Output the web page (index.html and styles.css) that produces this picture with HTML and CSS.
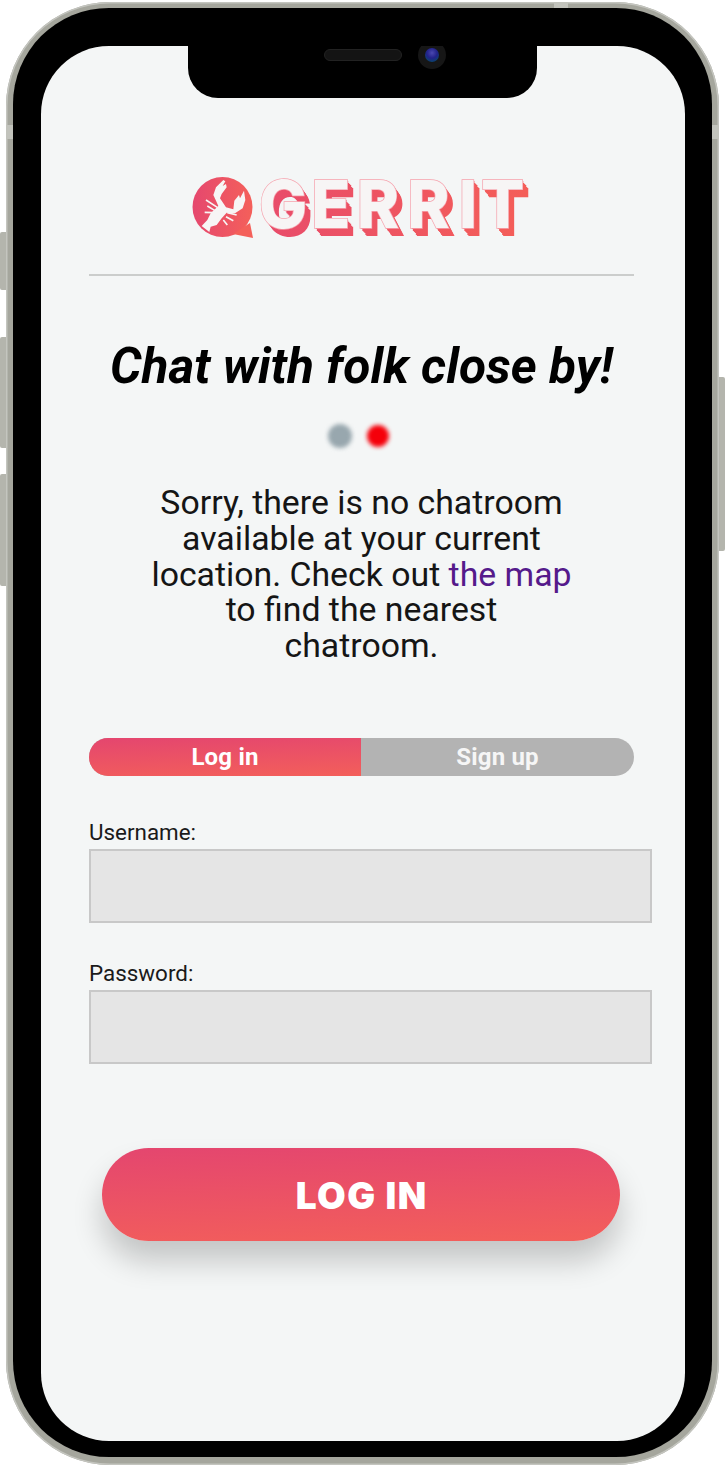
FILE: index.html
```html
<!DOCTYPE html>
<html lang="en">
<head>
<meta charset="utf-8">
<title>Gerrit</title>
<link rel="stylesheet" href="styles.css">
</head>
<body>
<div class="phone">
  <span class="side side-l1"></span>
  <span class="side side-l2"></span>
  <span class="side side-l3"></span>
  <span class="side side-r1"></span>
  <span class="band band-l"></span>
  <span class="band band-r"></span>
  <span class="band band-t"></span>
  <div class="bezel">
    <div class="screen">
      <div class="notch">
        <span class="speaker"></span>
        <span class="camera"><span class="lens"></span></span>
      </div>
      <main class="content">
        <header class="brand">
          <svg class="logo" width="340" height="64" viewBox="0 0 340 64" aria-label="Gerrit">
            <defs>
              <linearGradient id="g" gradientUnits="userSpaceOnUse" x1="0" y1="0" x2="340" y2="0">
                <stop offset="0" stop-color="#e5476f"/>
                <stop offset="1" stop-color="#f45e58"/>
              </linearGradient>
              <linearGradient id="b" gradientUnits="userSpaceOnUse" x1="0" y1="0" x2="62" y2="0">
                <stop offset="0" stop-color="#e5476f"/>
                <stop offset="1" stop-color="#f4605a"/>
              </linearGradient>
              <text id="word" class="logo-word" transform="scale(.97 1)" x="70 124 171 223 276 299" y="52">GERRIT</text>
            </defs>
            <circle cx="31.500" cy="31" r="30" fill="url(#b)"/>
            <path fill="#f4605a" d="M48 54L59 47L62 62L42 58z"/>
            <g transform="translate(-1 -6) scale(.3333)">
              <path fill="#f7f5f5" d="M35 168L52 150L62 130L85 108L78 92L70 75L78 52L100 30L106 34L98 48L108 42L110 52L95 72L90 85L100 100L108 112L130 118L133 92L147 75L150 85L162 62L166 90L158 115L135 130L110 128L95 145L80 165L62 170L58 186z"/>
              <path fill="none" stroke="#f7f5f5" stroke-width="5" d="M48 90L82 112M52 108L75 122M44 127L72 128M112 128L140 135M108 140L130 152M100 150L112 165"/>
            </g>
            <use href="#word" x="6" y="8" fill="url(#g)"/>
            <use href="#word" x="5" y="7" fill="url(#g)"/>
            <use href="#word" x="4" y="5" fill="url(#g)"/>
            <use href="#word" x="3" y="4" fill="url(#g)"/>
            <use href="#word" x="2" y="3" fill="url(#g)"/>
            <use href="#word" x="1" y="1" fill="url(#g)"/>
            <use href="#word" class="logo-face"/>
          </svg>
        </header>
        <hr class="rule">
        <h1 class="title">Chat with folk close by!</h1>
        <div class="status">
          <span class="dot dot-grey"></span>
          <span class="dot dot-red"></span>
        </div>
        <p class="message">Sorry, there is no chatroom available at your current location. Check out <a class="link" href="#">the map</a> to find the nearest chatroom.</p>
        <div class="tabs">
          <div class="tab tab-active">Log in</div>
          <div class="tab">Sign up</div>
        </div>
        <form class="form">
          <label class="field">
            <span class="label">Username:</span>
            <input class="input" type="text">
          </label>
          <label class="field">
            <span class="label">Password:</span>
            <input class="input" type="password">
          </label>
          <button class="submit" type="button">LOG IN</button>
        </form>
      </main>
    </div>
  </div>
</div>
</body>
</html>
```

FILE: styles.css
```css
* { box-sizing: border-box; }
html, body { margin: 0; padding: 0; background: #fff; }
body { width: 725px; height: 1467px; overflow: hidden; font-family: Roboto, sans-serif; }

.phone {
  position: relative;
  width: 713px;
  height: 1463px;
  margin: 2px 0 0 6px;
  padding: 6px 7px 8px;
  border-radius: 104px;
  background: #a5a69d;
  box-shadow: inset 0 0 0 1.5px #c4c5bf;
}
.side { position: absolute; background: #b4b5ad; }
.side-l1 { left: -6px; top: 230px; width: 6px; height: 58px; border-radius: 2px 0 0 2px; }
.side-l2 { left: -6px; top: 335px; width: 6px; height: 111px; border-radius: 2px 0 0 2px; }
.side-l3 { left: -6px; top: 472px; width: 6px; height: 112px; border-radius: 2px 0 0 2px; }
.side-r1 { right: -6px; top: 375px; width: 6px; height: 174px; border-radius: 0 2px 2px 0; }
.band { position: absolute; background: #c2c3bc; }
.band-l { left: 0; top: 123px; width: 7px; height: 14px; }
.band-r { right: 0; top: 123px; width: 7px; height: 14px; }
.band-t { left: 548px; top: 0; width: 14px; height: 6px; }

.bezel {
  height: 100%;
  padding: 38px 27px 16px 28px;
  border-radius: 96px;
  background: #000;
}
.screen {
  position: relative;
  height: 100%;
  border-radius: 68px;
  background: #f4f6f6;
  overflow: hidden;
}
.notch {
  position: absolute;
  left: 147px;
  top: 0;
  width: 349px;
  height: 52px;
  border-radius: 0 0 30px 30px;
  background: #000;
}
.speaker {
  position: absolute;
  left: 136px;
  top: 3px;
  width: 78px;
  height: 12px;
  border-radius: 6px;
  background: #141414;
  border: 1px solid #222;
}
.camera {
  position: absolute;
  left: 230px;
  top: -5px;
  width: 28px;
  height: 28px;
  border-radius: 50%;
  background: #161616;
  display: flex;
  align-items: center;
  justify-content: center;
}
.lens {
  width: 14px;
  height: 14px;
  border-radius: 50%;
  background: radial-gradient(circle at 50% 35%, #4a48b0 0, #22228a 45%, #0d3f70 75%, #0a0a1c 100%);
}

.content { padding: 0 0 0 48px; width: 593px; display: flex; flex-direction: column; }
.brand { padding-top: 130px; height: 228px; display: flex; justify-content: flex-start; padding-left: 102px; }
.logo { display: block; flex: none; overflow: visible; }
.logo-word { font-family: Inter, Roboto, sans-serif; font-weight: 800; font-size: 66px; }
.logo-face { fill: #f7f5f5; stroke: #f6a3ae; stroke-width: 1.500px; paint-order: stroke; }
.rule { width: 545px; height: 2px; margin: 0; border: 0; background: #cbcdcc; }

.title {
  width: 545px;
  margin: 60px 0 0;
  font-size: 49.600px;
  line-height: 60px;
  font-weight: 700;
  font-style: italic;
  text-align: center;
  color: #000;
}
.status { width: 545px; height: 24px; display: flex; align-items: center; justify-content: center; gap: 15px; margin-top: 28px; padding-right: 6px; }
.dot { border-radius: 50%; filter: blur(2px); }
.dot-grey { width: 24px; height: 24px; background: #98a7ae; }
.dot-red { width: 22px; height: 22px; background: #f5000a; }

.message {
  width: 424px;
  margin: 37px 0 0 60.500px;
  font-size: 33.800px;
  line-height: 35.800px;
  text-align: center;
  color: #151515;
}
.link { color: #551a8b; text-decoration: none; }

.tabs {
  width: 545px;
  height: 38px;
  margin-top: 74px;
  display: flex;
  border-radius: 19px;
  overflow: hidden;
  background: #b3b3b3;
}
.tab {
  flex: 1;
  font-size: 24px;
  font-weight: 700;
  letter-spacing: 0.200px;
  line-height: 38px;
  text-align: center;
  color: #f6f6f6;
}
.tab-active { flex: 0 0 272px; background: linear-gradient(178deg, #e4466f, #f35f5a); color: #fff; }

.form { display: flex; flex-direction: column; margin-top: 39px; }
.field { display: flex; flex-direction: column; margin-bottom: 33px; }
.label { font-size: 22.400px; line-height: 34px; color: #1a1a1a; }
.input {
  width: 563px;
  height: 74px;
  margin: 0;
  padding: 0;
  border: 2px solid #c8c8c8;
  border-radius: 0;
  background: #e5e5e5;
  outline: 0;
}
.submit {
  width: 518px;
  height: 93px;
  margin: 51px 0 0 13px;
  padding: 2px 0 0 1.500px;
  border: 0;
  border-radius: 47px;
  background: linear-gradient(178deg, #e4466f, #f35f5a);
  box-shadow: 0 20px 30px rgba(0, 0, 0, 0.2);
  font-family: Inter, Roboto, sans-serif;
  font-size: 37px;
  font-weight: 900;
  letter-spacing: 1.500px;
  color: #fff;
}
```
